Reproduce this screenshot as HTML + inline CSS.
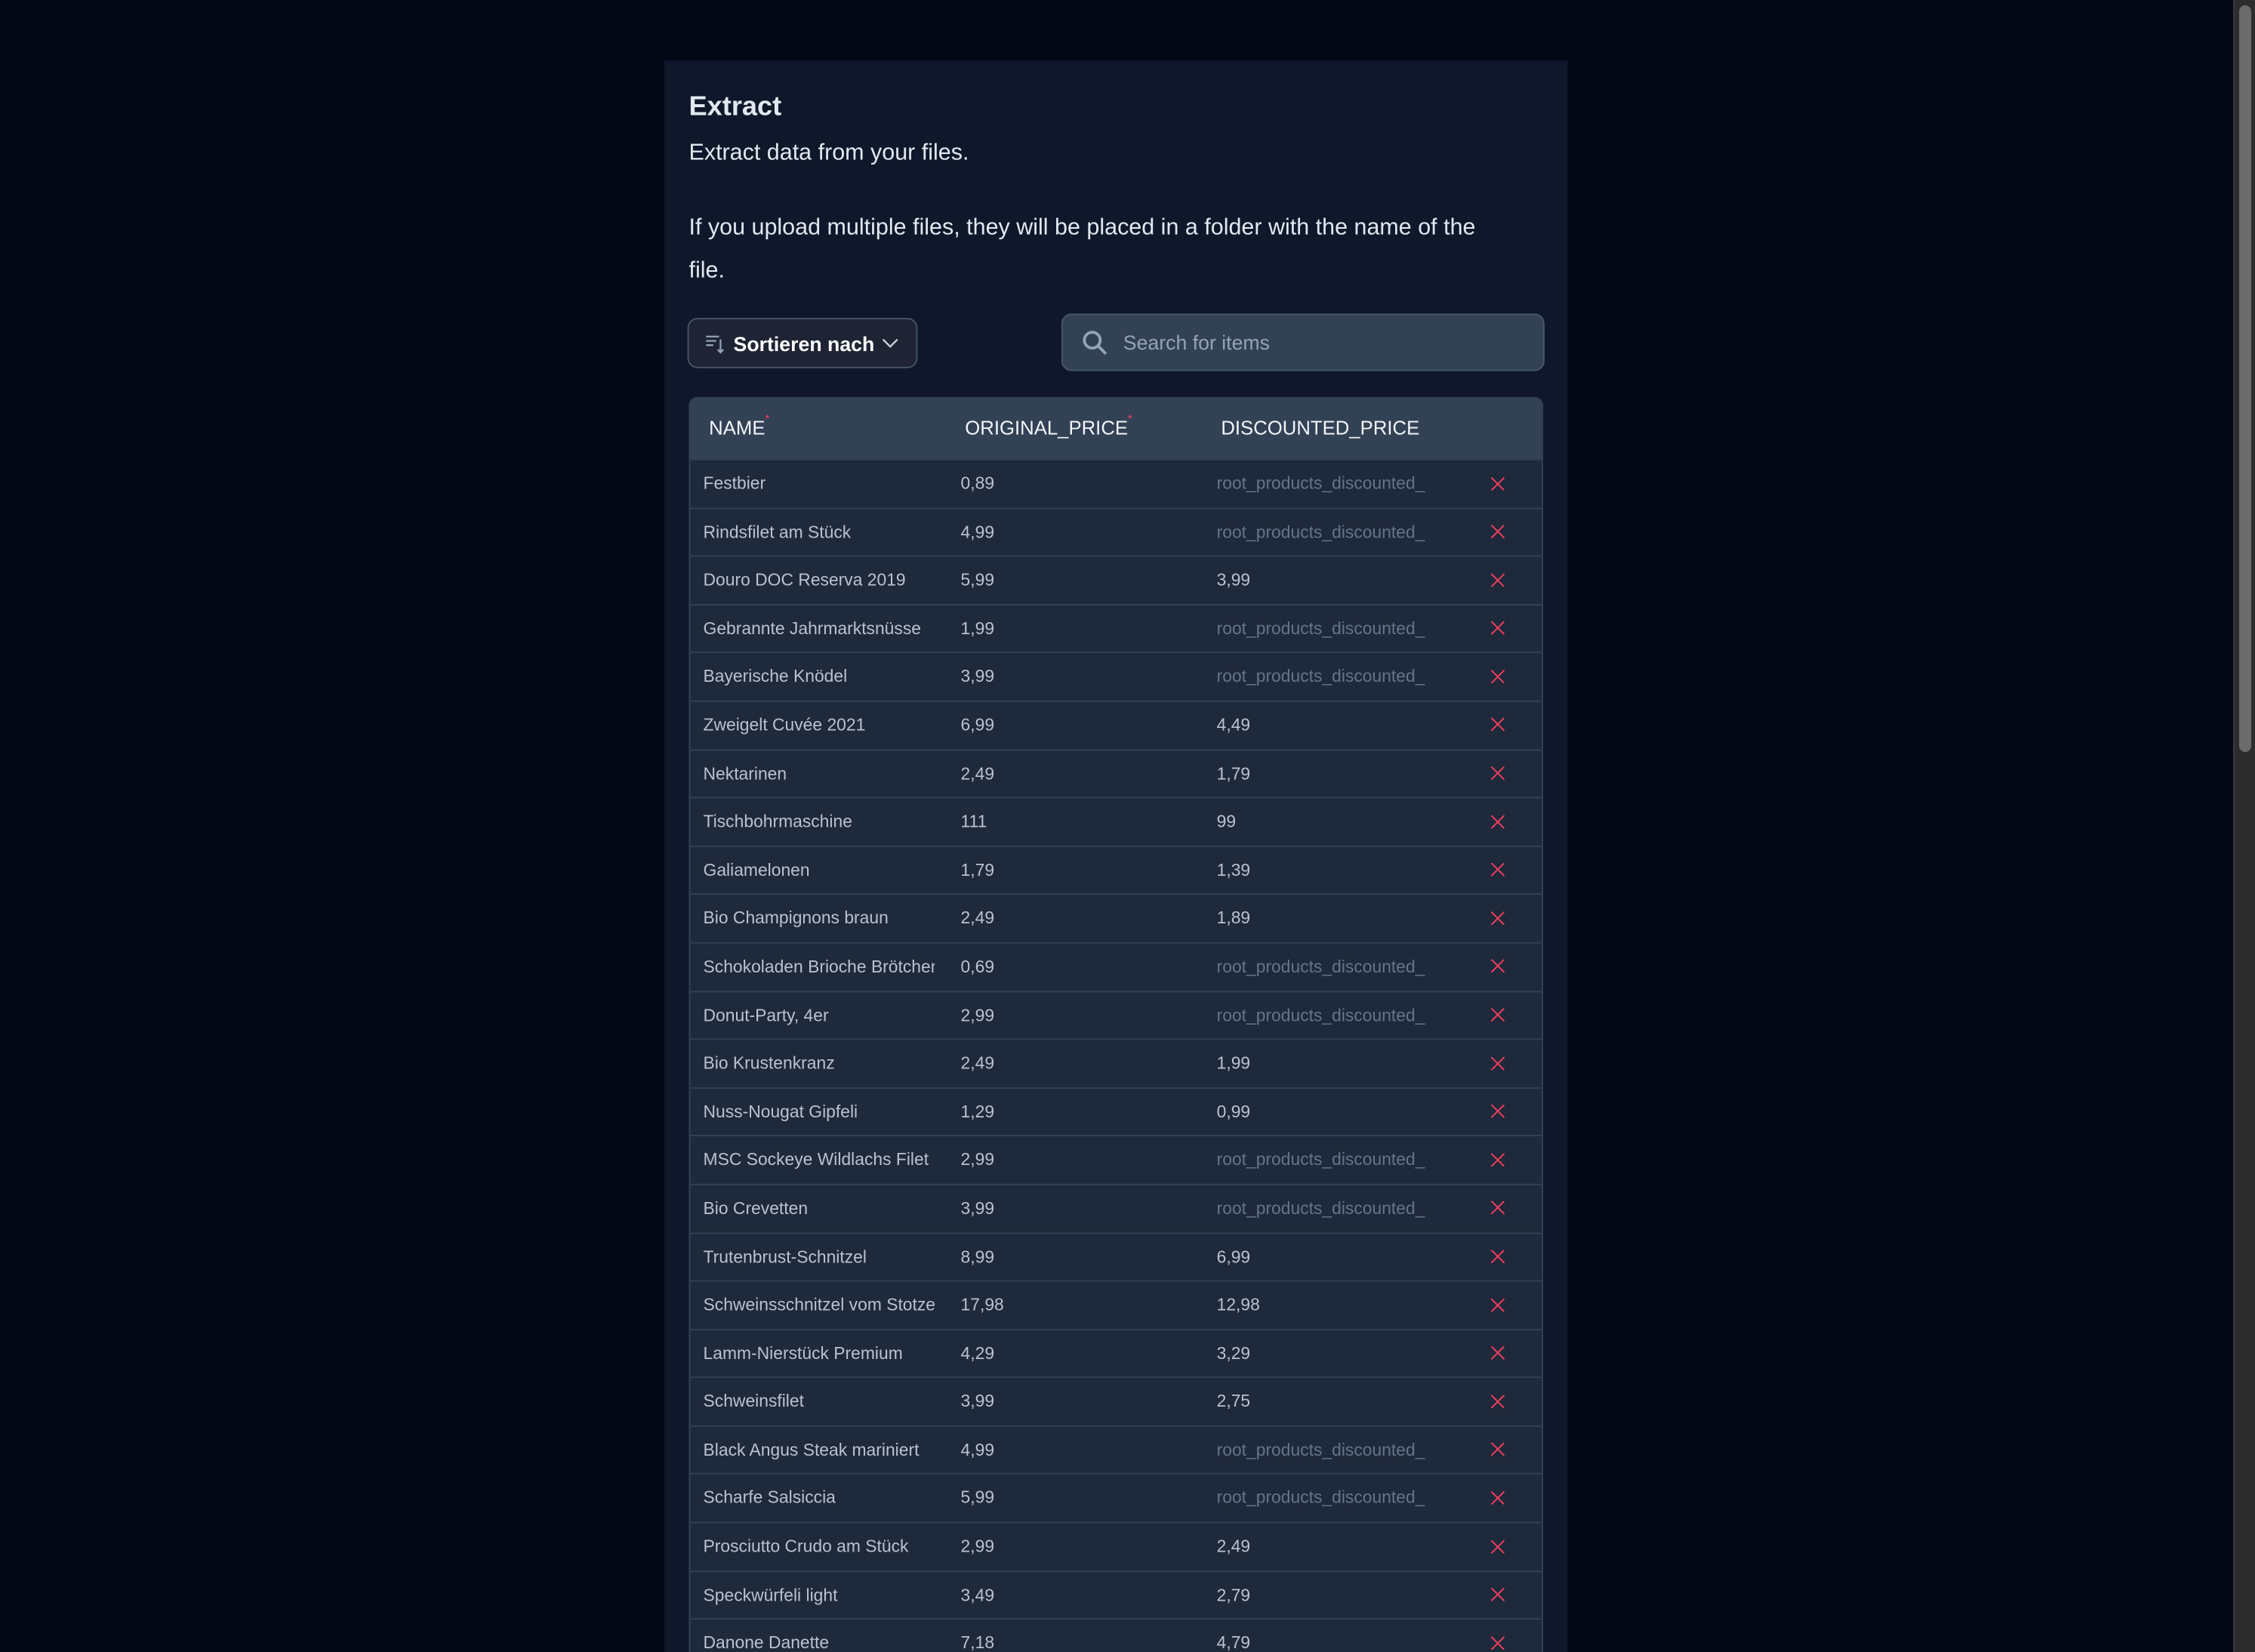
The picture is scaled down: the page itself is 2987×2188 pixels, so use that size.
<!DOCTYPE html>
<html><head><meta charset="utf-8"><style>
html,body{margin:0;padding:0;background:#030816;width:2987px;height:2188px;overflow:hidden}
#w{position:absolute;left:0;top:0;width:2987px;height:2188px;overflow:hidden}
#s{position:absolute;left:0;top:0;width:1568px;height:1149px;overflow:hidden;transform:scale(1.905);transform-origin:0 0;font-family:"Liberation Sans","DejaVu Sans",sans-serif}
.panel{position:absolute;left:462px;top:42px;width:628px;height:1107px;background:#0f172a}
h1{position:absolute;left:479px;top:64px;margin:0;font-size:19px;font-weight:bold;color:#e2e8f0}
.p{position:absolute;left:479px;color:#e2e8f0;font-size:16px}
.sort{position:absolute;left:478px;top:221px;width:160px;height:35px;border:1px solid #475569;border-radius:7px;background:#1e2434;box-sizing:border-box;color:#fff;font-weight:bold;font-size:14px}
.search{position:absolute;left:738px;top:218px;width:336px;height:40px;border:1px solid #475569;border-radius:7px;background:#334155;box-sizing:border-box;color:#94a3b8;font-size:14px}
.table{position:absolute;left:479px;top:276px;width:594px;height:900px;background:#1e293b;border:1px solid #334155;border-radius:6px 6px 0 0;box-sizing:border-box;overflow:hidden}
.hd{height:42px;background:#334155;position:relative;color:#f1f5f9;font-size:13.5px}
.hd span{position:absolute;top:13px}
.hd sup{color:#f43f5e;font-size:8px;vertical-align:top;position:relative;top:-3px}
.row{height:32.6px;border-top:1px solid #334155;position:relative;font-size:12px;color:#b8c2d0}
.row span{position:absolute;top:9px;white-space:nowrap;overflow:hidden}
.c1{left:9px;width:161px}.c2{left:188px}.c3{left:366px}.g{color:#64748b}
.x{left:556px;top:11px!important;width:10px;height:10px}
.x::before,.x::after{content:"";position:absolute;left:4.5px;top:-1.5px;width:1.2px;height:13px;background:#f43f5e;transform:rotate(45deg)}
.x::after{transform:rotate(-45deg)}
</style></head><body>
<div id="w"><div id="s">
<div class="panel"></div>
<h1>Extract</h1>
<div class="p" style="top:98px">Extract data from your files.</div>
<div class="p" style="top:144px;width:572px;line-height:29.5px">If you upload multiple files, they will be placed in a folder with the name of the file.</div>
<div class="sort"><svg style="position:absolute;left:11px;top:10px" width="14" height="14" viewBox="0 0 14 14" fill="none" stroke="#94a3b8" stroke-width="1.2"><path d="M1 2h9M1 5h7M1 8h5M11 4v9M9 11l2 2 2-2"/></svg><span style="position:absolute;left:31px;top:9px">Sortieren nach</span><svg style="position:absolute;left:134px;top:13px" width="12" height="8" viewBox="0 0 12 8" fill="none" stroke="#cbd5e1" stroke-width="1.2"><path d="M1 1l5 5 5-5"/></svg></div>
<div class="search"><svg style="position:absolute;left:13px;top:10px" width="19" height="19" viewBox="0 0 19 19" fill="none" stroke="#94a3b8" stroke-width="2"><circle cx="7.5" cy="7.5" r="5.5"/><path d="M11.5 11.5l5.5 5.5"/></svg><span style="position:absolute;left:42px;top:11px">Search for items</span></div>
<div class="table">
<div class="hd"><span style="left:13px">NAME<sup>*</sup></span><span style="left:191px">ORIGINAL_PRICE<sup>*</sup></span><span style="left:369px">DISCOUNTED_PRICE</span></div>
<div class="row"><span class="c1">Festbier</span><span class="c2">0,89</span><span class="c3 g">root_products_discounted_</span><span class="x"></span></div>
<div class="row"><span class="c1">Rindsfilet am Stück</span><span class="c2">4,99</span><span class="c3 g">root_products_discounted_</span><span class="x"></span></div>
<div class="row"><span class="c1">Douro DOC Reserva 2019</span><span class="c2">5,99</span><span class="c3">3,99</span><span class="x"></span></div>
<div class="row"><span class="c1">Gebrannte Jahrmarktsnüsse</span><span class="c2">1,99</span><span class="c3 g">root_products_discounted_</span><span class="x"></span></div>
<div class="row"><span class="c1">Bayerische Knödel</span><span class="c2">3,99</span><span class="c3 g">root_products_discounted_</span><span class="x"></span></div>
<div class="row"><span class="c1">Zweigelt Cuvée 2021</span><span class="c2">6,99</span><span class="c3">4,49</span><span class="x"></span></div>
<div class="row"><span class="c1">Nektarinen</span><span class="c2">2,49</span><span class="c3">1,79</span><span class="x"></span></div>
<div class="row"><span class="c1">Tischbohrmaschine</span><span class="c2">111</span><span class="c3">99</span><span class="x"></span></div>
<div class="row"><span class="c1">Galiamelonen</span><span class="c2">1,79</span><span class="c3">1,39</span><span class="x"></span></div>
<div class="row"><span class="c1">Bio Champignons braun</span><span class="c2">2,49</span><span class="c3">1,89</span><span class="x"></span></div>
<div class="row"><span class="c1">Schokoladen Brioche Brötchen</span><span class="c2">0,69</span><span class="c3 g">root_products_discounted_</span><span class="x"></span></div>
<div class="row"><span class="c1">Donut-Party, 4er</span><span class="c2">2,99</span><span class="c3 g">root_products_discounted_</span><span class="x"></span></div>
<div class="row"><span class="c1">Bio Krustenkranz</span><span class="c2">2,49</span><span class="c3">1,99</span><span class="x"></span></div>
<div class="row"><span class="c1">Nuss-Nougat Gipfeli</span><span class="c2">1,29</span><span class="c3">0,99</span><span class="x"></span></div>
<div class="row"><span class="c1">MSC Sockeye Wildlachs Filet</span><span class="c2">2,99</span><span class="c3 g">root_products_discounted_</span><span class="x"></span></div>
<div class="row"><span class="c1">Bio Crevetten</span><span class="c2">3,99</span><span class="c3 g">root_products_discounted_</span><span class="x"></span></div>
<div class="row"><span class="c1">Trutenbrust-Schnitzel</span><span class="c2">8,99</span><span class="c3">6,99</span><span class="x"></span></div>
<div class="row"><span class="c1">Schweinsschnitzel vom Stotzen</span><span class="c2">17,98</span><span class="c3">12,98</span><span class="x"></span></div>
<div class="row"><span class="c1">Lamm-Nierstück Premium</span><span class="c2">4,29</span><span class="c3">3,29</span><span class="x"></span></div>
<div class="row"><span class="c1">Schweinsfilet</span><span class="c2">3,99</span><span class="c3">2,75</span><span class="x"></span></div>
<div class="row"><span class="c1">Black Angus Steak mariniert</span><span class="c2">4,99</span><span class="c3 g">root_products_discounted_</span><span class="x"></span></div>
<div class="row"><span class="c1">Scharfe Salsiccia</span><span class="c2">5,99</span><span class="c3 g">root_products_discounted_</span><span class="x"></span></div>
<div class="row"><span class="c1">Prosciutto Crudo am Stück</span><span class="c2">2,99</span><span class="c3">2,49</span><span class="x"></span></div>
<div class="row"><span class="c1">Speckwürfeli light</span><span class="c2">3,49</span><span class="c3">2,79</span><span class="x"></span></div>
<div class="row"><span class="c1">Danone Danette</span><span class="c2">7,18</span><span class="c3">4,79</span><span class="x"></span></div>
</div>
</div>
<div style="position:absolute;left:2958px;top:0;width:29px;height:2188px;background:#2c2c2c;border-left:2px solid #3a3a3a;box-sizing:border-box"></div>
<div style="position:absolute;left:2966px;top:7px;width:16px;height:989px;background:#6b6b6b;border-radius:8px"></div>
</div>
</body></html>
